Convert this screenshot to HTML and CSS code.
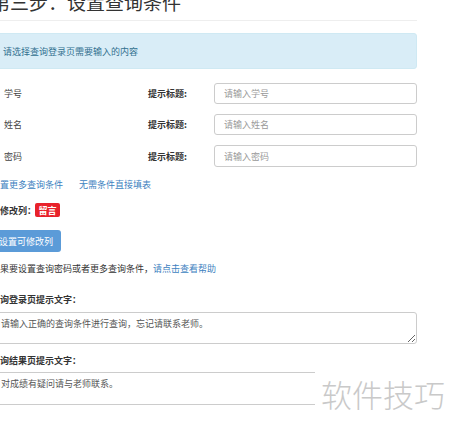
FILE: index.html
```html
<!DOCTYPE html>
<html lang="zh-CN">
<head>
<meta charset="utf-8">
<title>第三步：设置查询条件</title>
<link rel="stylesheet" href="styles.css">
</head>
<body>
<div class="page">
  <h3 class="title">第三步：设置查询条件</h3>
  <div class="alert">请选择查询登录页需要输入的内容</div>
  <div class="fields">
    <div class="field">
      <span class="name">学号</span>
      <span class="hint">提示标题:</span>
      <input class="input" type="text" placeholder="请输入学号">
    </div>
    <div class="field">
      <span class="name">姓名</span>
      <span class="hint">提示标题:</span>
      <input class="input" type="text" placeholder="请输入姓名">
    </div>
    <div class="field">
      <span class="name">密码</span>
      <span class="hint">提示标题:</span>
      <input class="input tall" type="text" placeholder="请输入密码">
    </div>
  </div>
  <div class="links">
    <a class="link">设置更多查询条件</a>
    <a class="link">无需条件直接填表</a>
  </div>
  <div class="modify">
    <span class="bold">可修改列：</span><span class="badge">留言</span>
  </div>
  <button class="btn" type="button">设置可修改列</button>
  <div class="help">如果要设置查询密码或者更多查询条件，<a class="link">请点击查看帮助</a></div>
  <div class="label first">查询登录页提示文字：</div>
  <textarea class="area">请输入正确的查询条件进行查询，忘记请联系老师。</textarea>
  <div class="label">查询结果页提示文字：</div>
  <textarea class="area area2">对成绩有疑问请与老师联系。</textarea>
</div>
<div class="watermark">软件技巧</div>
</body>
</html>
```
FILE: styles.css
```css
html, body {
  margin: 0;
  padding: 0;
  background: #fff;
  overflow: hidden;
}
body {
  width: 450px;
  height: 429px;
  position: relative;
  font-family: "Noto Sans CJK SC", "Noto Sans", sans-serif;
  font-size: 9px;
  line-height: 13px;
  color: #333;
}
.page {
  margin-left: -9px;
  margin-top: -9px;
  width: 426px;
  display: flex;
  flex-direction: column;
  align-items: flex-start;
}
.title {
  margin: 0;
  width: 100%;
  font-size: 19px;
  line-height: 22px;
  font-weight: normal;
  color: #333;
  padding-bottom: 7px;
  border-bottom: 1px solid #eee;
}
.alert {
  box-sizing: border-box;
  margin-top: 12px;
  width: 100%;
  height: 36px;
  display: flex;
  align-items: center;
  padding-left: 11px;
  background: #d9edf7;
  border: 1px solid #cfe9f3;
  border-radius: 3px;
  color: #31708f;
}
.fields {
  margin-top: 14px;
  width: 100%;
  display: flex;
  flex-direction: column;
  gap: 10px;
}
.field {
  display: grid;
  grid-template-columns: 157px 66px 203px;
  align-items: center;
}
.name {
  padding-left: 13px;
  color: #444;
}
.hint {
  font-weight: bold;
  color: #333;
}
.input {
  box-sizing: border-box;
  height: 21px;
  width: 203px;
  margin: 0;
  padding: 0 9px;
  border: 1px solid #ccc;
  border-radius: 3px;
  font-family: inherit;
  font-size: 9px;
  color: #555;
  outline: none;
}
.input.tall {
  height: 22px;
}
.input::placeholder {
  color: #999;
}
.links {
  margin-top: 11px;
  display: flex;
  gap: 16px;
}
.link {
  color: #3c7fc0;
  text-decoration: none;
}
.modify {
  margin-top: 11px;
  height: 16px;
  display: flex;
  align-items: center;
}
.bold {
  font-weight: bold;
}
.badge {
  display: inline-flex;
  align-items: center;
  height: 14px;
  padding: 0 3.5px;
  margin-left: -1px;
  background: #e8222b;
  color: #fff;
  font-weight: bold;
  border-radius: 2px;
}
.btn {
  margin-top: 12px;
  height: 22px;
  width: 70px;
  padding: 0;
  border: none;
  border-radius: 3px;
  background: #5b9bd8;
  color: #fff;
  font-family: inherit;
  font-size: 9px;
  line-height: 13px;
}
.help {
  margin-top: 10px;
}
.label {
  margin-top: 10px;
  font-weight: bold;
}
.label.first {
  margin-top: 18px;
}
.area {
  box-sizing: border-box;
  display: block;
  margin: 6px 0 0;
  width: 100%;
  height: 32px;
  padding: 4px 9px;
  border: 1px solid #ccc;
  border-radius: 3px;
  font-family: inherit;
  font-size: 9px;
  line-height: 13px;
  color: #555;
  outline: none;
}
.area2 {
  margin-top: 5px;
  height: 33px;
}
.watermark {
  position: absolute;
  left: 315px;
  top: 364px;
  width: 135px;
  height: 60px;
  background: #fff;
  display: flex;
  align-items: center;
  justify-content: flex-end;
  padding-right: 5px;
  box-sizing: border-box;
  font-size: 31px;
  line-height: 36px;
  font-weight: 300;
  color: #c9c9c9;
}
```
